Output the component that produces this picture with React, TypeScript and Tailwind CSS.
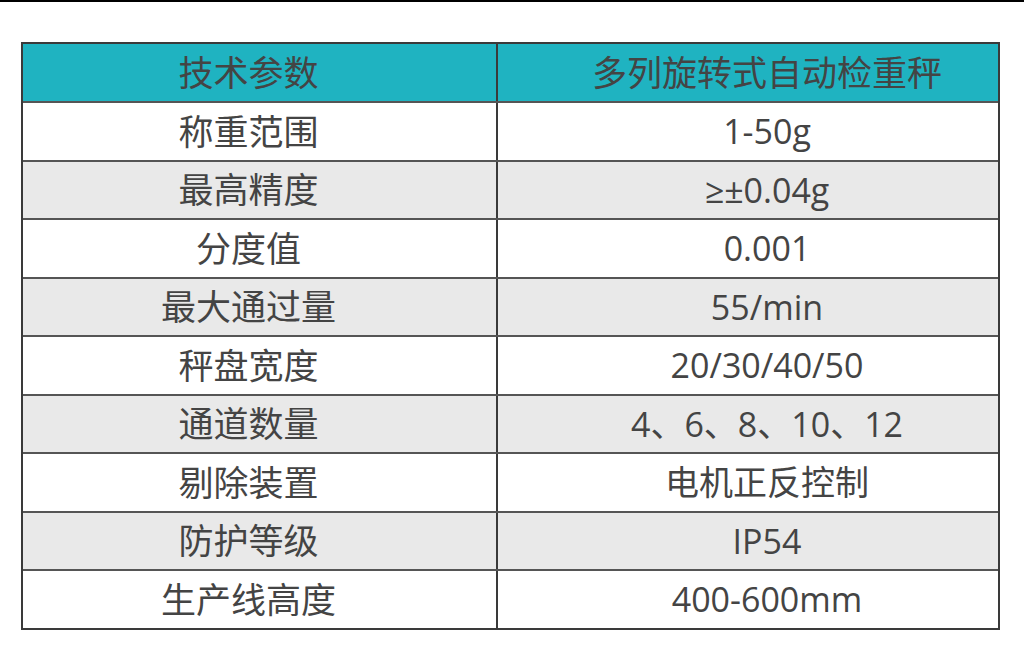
const rows: [string, string][] = [
  ['称重范围', '1-50g'],
  ['最高精度', '≥±0.04g'],
  ['分度值', '0.001'],
  ['最大通过量', '55/min'],
  ['秤盘宽度', '20/30/40/50'],
  ['通道数量', '4、6、8、10、12'],
  ['剔除装置', '电机正反控制'],
  ['防护等级', 'IP54'],
  ['生产线高度', '400-600mm'],
];

const font = { fontFamily: '"Open Sans", "Noto Sans CJK SC", sans-serif' };

export default function App() {
  return (
    <div className="w-[1024px] h-[665px] bg-white overflow-hidden" style={font}>
      <div className="h-[2px] bg-black" />
      <div className="pt-[40px] pl-[21px]">
        <div className="w-[979px] border-2 border-[#3a3a3a] text-[#444] text-[35px] leading-none">
          {/* header */}
          <div className="flex h-[57px] bg-[#1fb3c1]">
            <div className="w-[475px] flex items-center justify-center pr-[22px] border-r-2 border-[#3a3a3a]">
              技术参数
            </div>
            <div className="flex-1 flex items-center justify-center pl-[38px]">
              多列旋转式自动检重秤
            </div>
          </div>
          {rows.map(([k, v], i) => (
            <div
              key={k}
              className={`flex h-[58.5px] border-t-2 border-[#555] ${i % 2 === 1 ? 'bg-[#e9e9e9]' : 'bg-white'}`}
            >
              <div className="w-[475px] flex items-center justify-center pr-[22px] border-r-2 border-[#3a3a3a]">
                {k}
              </div>
              <div className="flex-1 flex items-center justify-center pl-[38px] text-[34px]">{v}</div>
            </div>
          ))}
        </div>
      </div>
    </div>
  );
}
